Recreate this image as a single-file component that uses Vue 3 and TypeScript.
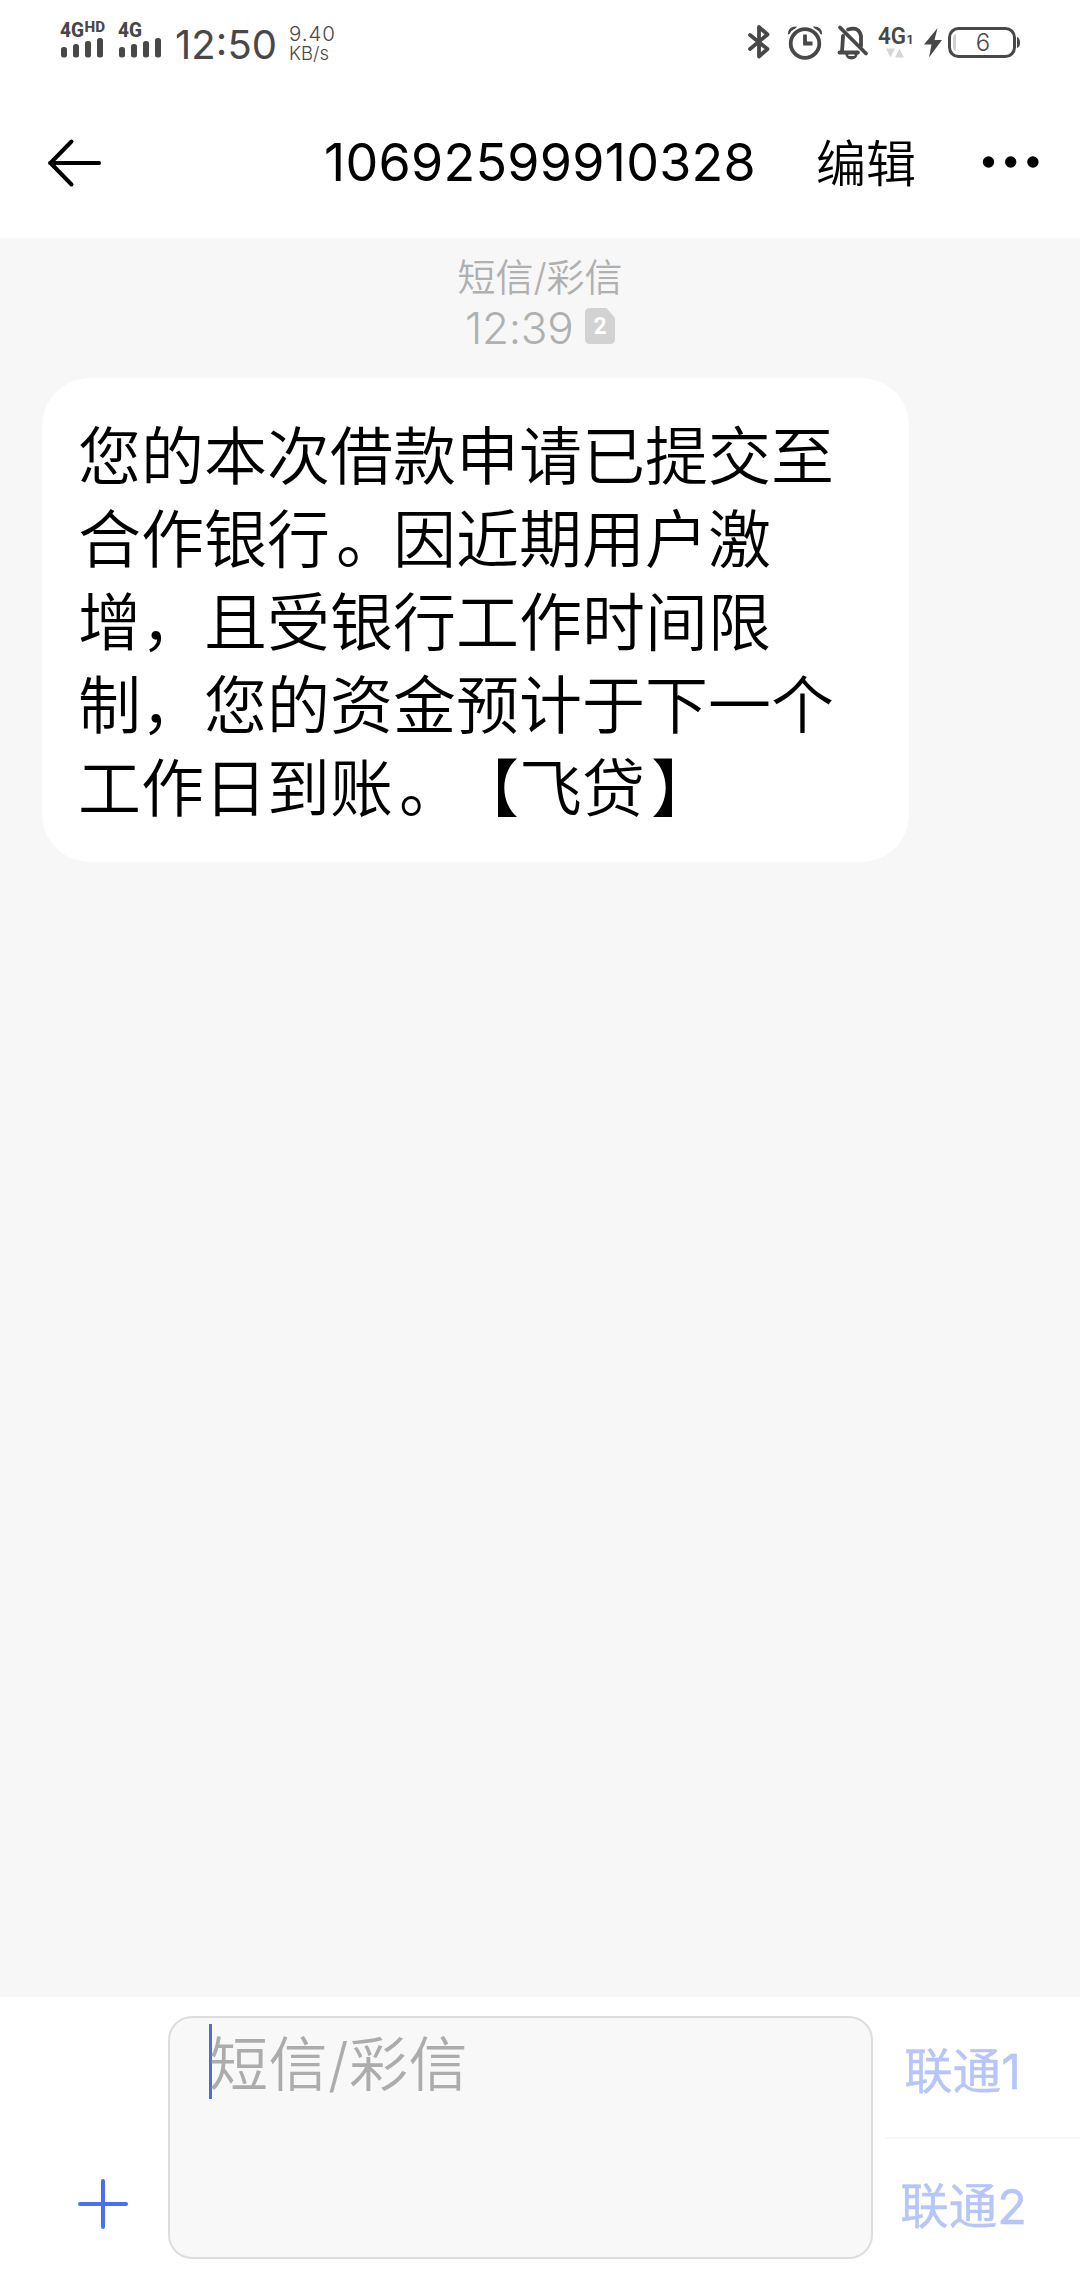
<script setup lang="ts">
interface Sim {
  name: string
}

const sender = '10692599910328'
const message: string[] = [
  '您的本次借款申请已提交至',
  '合作银行。因近期用户激',
  '增，且受银行工作时间限',
  '制，您的资金预计于下一个',
  '工作日到账。【飞贷】',
]
const sims: Sim[] = [{ name: '联通1' }, { name: '联通2' }]
const bars = [0, 1, 2, 3]

// Closing marks are set apart so they can sit nearer the middle of their cell.
const pieces = (line: string): string[] => line.split(/([。】])/)
</script>

<template>
  <div class="screen">
    <header class="status">
      <div class="status-left">
        <svg class="signal" width="52" height="50" viewBox="0 -12 52 50">
          <text class="condensed" x="0" y="15" font-size="20.500" font-weight="800" textLength="24" lengthAdjust="spacingAndGlyphs">4G</text>
          <text class="condensed" x="24.500" y="9.500" font-size="14" font-weight="800" textLength="20.500" lengthAdjust="spacingAndGlyphs">HD</text>
          <rect v-for="i in bars" :key="i" :x="1 + i * 12" :y="25 - i * 3" width="6" :height="10.500 + i * 3" rx="2.500" />
        </svg>
        <svg class="signal second" width="46" height="50" viewBox="0 -12 46 50">
          <text class="condensed" x="0" y="15" font-size="20.500" font-weight="800" textLength="24" lengthAdjust="spacingAndGlyphs">4G</text>
          <rect v-for="i in bars" :key="i" :x="1 + i * 12" :y="25 - i * 3" width="6" :height="10.500 + i * 3" rx="2.500" />
        </svg>
        <svg class="clock" width="104" height="62" viewBox="0 -12 104 62">
          <text x="0" y="36.500" font-size="40" textLength="102" lengthAdjust="spacing">12:50</text>
        </svg>
        <svg class="speed" width="50" height="62" viewBox="0 -12 50 62">
          <text x="0" y="19" font-size="20.500" font-weight="350" textLength="46" lengthAdjust="spacing">9.40</text>
          <text x="0" y="37.500" font-size="18.500" font-weight="350" textLength="40" lengthAdjust="spacingAndGlyphs">KB/s</text>
        </svg>
      </div>
      <div class="status-right">
        <svg width="24" height="36" viewBox="0 0 24 36" fill="none" stroke="#484848" stroke-width="3.800" stroke-linejoin="round" stroke-linecap="round">
          <path d="M3 11 20.500 25 12 32.500V3L20.500 10.500 3 25" />
        </svg>
        <svg class="alarm" width="36" height="36" viewBox="0 0 36 36" fill="none" stroke="#484848">
          <circle cx="18" cy="19.500" r="14.300" stroke-width="3.800" />
          <path d="M18 10.500v9h7.500" stroke-width="3.800" />
          <path d="M.800 10.500Q.800 2 10 2.500L9 4Q4.500 6 2.500 10ZM35.200 10.500Q35.200 2 26 2.500L27 4Q31.500 6 33.500 10Z" fill="#484848" stroke="none" />
        </svg>
        <svg class="bell" width="32" height="36" viewBox="0 0 32 36" fill="none" stroke="#484848" stroke-width="3.800" stroke-linecap="round">
          <path d="M3 3.500 29 29.500M11 5.500Q22 2 24 12v10M6 12Q5.500 22 5 27M2.500 28.500H21" />
          <path d="M8 29Q9 35.500 14.500 35.500T21 29Z" fill="#484848" stroke="none" />
          <path d="M12 31.200h5" stroke="#fff" stroke-width="1.500" />
        </svg>
        <svg class="network" width="38" height="36" viewBox="0 0 38 36">
          <text class="condensed" x="0" y="19.500" font-size="24.500" font-weight="600" textLength="28" lengthAdjust="spacingAndGlyphs">4G</text>
          <text x="29" y="19.500" font-size="12" font-weight="700">1</text>
          <path d="M8 24.500h9l-4.500 9zM17 33.500h9l-4.500-9z" fill="#d6d6d6" />
        </svg>
        <svg class="bolt" width="18" height="32" viewBox="0 0 18 32">
          <path d="M13.500 1 0 17.500H7.500L5 30.500 18 13H10.500Z" />
        </svg>
        <svg class="battery" width="74" height="32" viewBox="0 0 74 32">
          <rect x="1.500" y="1.500" width="65" height="28" rx="9" fill="none" stroke="#484848" stroke-width="3" />
          <path d="M8 7v17Q5 23 5 20V11Q5 8 8 7Z" fill="#d0d0d0" />
          <path d="M69 10q3 1 3 5.500t-3 5.500Z" />
          <text x="35" y="24" font-size="24" font-weight="350" text-anchor="middle">6</text>
        </svg>
      </div>
    </header>

    <nav class="bar">
      <svg class="back" width="56" height="48" viewBox="0 0 56 48" fill="none" stroke="#000" stroke-width="4" stroke-linecap="round" stroke-linejoin="round">
        <path d="M53 24H4M25.500 2.500 4.500 24l21 21.500" />
      </svg>
      <h1 class="title">{{ sender }}</h1>
      <span class="edit">编辑</span>
      <svg class="more" width="58" height="12" viewBox="0 0 58 12">
        <circle cx="6.500" cy="6" r="5.700" />
        <circle cx="28.700" cy="6" r="5.700" />
        <circle cx="50.900" cy="6" r="5.700" />
      </svg>
    </nav>

    <main class="thread">
      <div class="kind">短信/彩信</div>
      <div class="when">
        <span class="time">12:39</span>
        <svg class="slot" width="30" height="36" viewBox="0 0 30 36">
          <path d="M5 0H21.500L30 10V31q0 5-5 5H5q-5 0-5-5V5Q0 0 5 0Z" fill="#d2d2d2" />
          <text class="condensed" x="15" y="26" font-size="23" font-weight="700" text-anchor="middle" fill="#fff">2</text>
        </svg>
      </div>
      <div class="bubble">
        <div v-for="line in message" :key="line" class="line"><span v-for="(piece, i) in pieces(line)" :key="i" :class="{ stop: piece === '。' || piece === '】' }">{{ piece }}</span></div>
      </div>
    </main>

    <footer class="composer">
      <svg class="plus" width="52" height="52" viewBox="0 0 52 52" fill="none" stroke="#4c6ff0" stroke-width="4" stroke-linecap="round">
        <path d="M3 26h46M26 3v46" />
      </svg>
      <div class="input">
        <i class="caret"></i>
        <span class="placeholder">短信/彩信</span>
      </div>
      <div class="sims">
        <div v-for="sim in sims" :key="sim.name" class="sim">{{ sim.name }}</div>
      </div>
    </footer>
  </div>
</template>

<style>
body {
  margin: 0;
}
</style>

<style scoped>
.screen {
  width: 1080px;
  height: 2280px;
  display: flex;
  flex-direction: column;
  background: #fff;
  font-family: Inter, "Noto Sans CJK SC", sans-serif;
  overflow: hidden;
}
svg {
  display: block;
  flex: none;
  overflow: visible;
}
svg text {
  font-family: Inter, sans-serif;
}
svg text.condensed {
  font-family: Roboto, sans-serif;
}
.status {
  height: 86px;
  display: flex;
  justify-content: space-between;
  fill: #484848;
}
.status-left {
  display: flex;
  padding: 10px 0 0 60px;
}
.second {
  margin-left: 6px;
}
.clock {
  margin-left: 11px;
}
.speed {
  margin-left: 10px;
}
.status-right {
  display: flex;
  padding: 24px 58px 0 0;
}
.alarm {
  margin-left: 16px;
}
.bell {
  margin-left: 14px;
}
.network {
  margin-left: 9px;
}
.bolt {
  margin: 3px 0 0 8px;
}
.battery {
  margin: 3px 0 0 6px;
}
.bar {
  height: 152px;
  display: flex;
  align-items: center;
}
.back {
  margin: 2px 0 0 46px;
}
.title {
  margin: 1px 0 0 222px;
  width: 440px;
  font-size: 52px;
  line-height: 64px;
  font-weight: 430;
  letter-spacing: 0.250px;
  white-space: nowrap;
}
.edit {
  width: 110px;
  margin: 4px 0 0 52px;
  font-size: 50px;
  line-height: 64px;
  font-weight: 350;
}
.more {
  margin-left: 56px;
}
.thread {
  height: 1759px;
  background: #f7f7f7;
  color: #b0b0b0;
  display: flex;
  flex-direction: column;
}
.kind {
  margin-top: 13px;
  height: 51px;
  font-size: 38px;
  line-height: 52px;
  font-weight: 350;
  text-align: center;
}
.when {
  height: 52px;
  display: flex;
  align-items: center;
  padding-left: 465px;
}
.time {
  width: 120px;
  font-size: 44px;
  line-height: 52px;
  font-weight: 300;
  letter-spacing: -0.300px;
}
.slot {
  margin-bottom: 4px;
}
.bubble {
  width: 867px;
  height: 484px;
  box-sizing: border-box;
  margin: 24px 0 0 42px;
  padding: 37px 0 0 36px;
  border-radius: 48px;
  background: #fff;
  color: #000;
}
.line {
  height: 83px;
  font-size: 63px;
  line-height: 83px;
  font-weight: 350;
  white-space: nowrap;
  text-spacing-trim: space-all;
  font-kerning: none;
}
.stop {
  position: relative;
  left: 6px;
}
.composer {
  height: 283px;
  display: flex;
}
.plus {
  margin: 181px 0 0 77px;
}
.input {
  width: 705px;
  height: 243px;
  box-sizing: border-box;
  margin: 19px 0 0 39px;
  padding: 6px 0 0 39px;
  border: 2px solid #ddd;
  border-radius: 24px;
  background: #f8f8f8;
  display: flex;
}
.caret {
  width: 3px;
  height: 75px;
  background: #4c6fd0;
}
.placeholder {
  font-size: 59px;
  line-height: 82px;
  height: 75px;
  font-weight: 350;
  letter-spacing: 0.500px;
  color: #acacac;
  margin-left: -3px;
}
.sims {
  width: 195px;
  margin-left: 12px;
}
.sim {
  height: 140px;
  line-height: 149px;
  padding-right: 40px;
  font-size: 48.500px;
  text-align: center;
  color: #b7c5f8;
  -webkit-text-stroke: 0.400px #b7c5f8;
  border-bottom: 2px solid #f7f7f7;
}
.sim:last-child {
  border-bottom: 0;
  line-height: 135px;
  padding-right: 38px;
}
</style>
